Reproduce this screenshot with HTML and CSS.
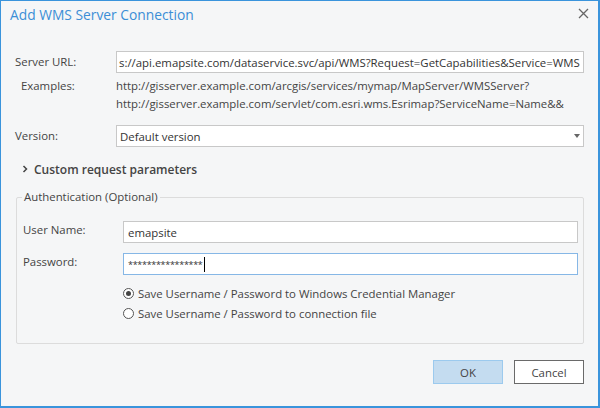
FILE: index.html
```html
<!DOCTYPE html>
<html>
<head>
<meta charset="utf-8">
<link rel="stylesheet" href="styles.css">
</head>
<body>
<div class="dialog">
  <div class="titlebar">
    <span class="title">Add WMS Server Connection</span>
    <svg class="close" width="11" height="11" viewBox="0 0 11 11"><path d="M1 1L10 10M10 1L1 10" stroke="#666" stroke-width="1.3" fill="none"/></svg>
  </div>
  <div class="form">
    <div class="row">
      <span class="label">Server URL:</span>
      <div class="field url">s://api.emapsite.com/dataservice.svc/api/WMS?Request=GetCapabilities&amp;Service=WMS</div>
    </div>
    <div class="row examples">
      <span class="label ex-label">Examples:</span>
      <div class="ex-lines">
        <div>http://gisserver.example.com/arcgis/services/mymap/MapServer/WMSServer?</div>
        <div>http://gisserver.example.com/servlet/com.esri.wms.Esrimap?ServiceName=Name&amp;&amp;</div>
      </div>
    </div>
    <div class="row version">
      <span class="label">Version:</span>
      <div class="field select"><span>Default version</span><span class="caret"></span></div>
    </div>
    <div class="expander">
      <svg width="8" height="8" viewBox="0 0 8 8"><path d="M2.5 1L5.5 4L2.5 7" stroke="#444" stroke-width="1.5" fill="none"/></svg>
      <span>Custom request parameters</span>
    </div>
    <fieldset class="group">
      <legend>Authentication (Optional)</legend>
      <div class="row inner">
        <span class="label ilabel">User Name:</span>
        <div class="field ifield">emapsite</div>
      </div>
      <div class="row inner pw">
        <span class="label ilabel">Password:</span>
        <div class="field ifield focus"><span class="stars">****************</span><span class="cursor"></span></div>
      </div>
      <div class="radios">
        <label class="radio"><span class="dot checked"></span>Save Username / Password to Windows Credential Manager</label>
        <label class="radio"><span class="dot"></span>Save Username / Password to connection file</label>
      </div>
    </fieldset>
    <div class="buttons">
      <button class="btn ok">OK</button>
      <button class="btn cancel">Cancel</button>
    </div>
  </div>
</div>
</body>
</html>
```
FILE: styles.css
```css
html, body {
  margin: 0;
  padding: 0;
  background: #f5f6f7;
}
.dialog {
  box-sizing: border-box;
  width: 600px;
  height: 408px;
  border: 1px solid #3a94dc;
  border-bottom-width: 2px;
  border-right-width: 2px;
  background: #f5f6f7;
  font-family: "Open Sans", "Noto Sans", sans-serif;
  font-size: 11.4px;
  color: #444;
}
.titlebar {
  height: 40px;
  display: flex;
  align-items: flex-start;
  justify-content: space-between;
  padding: 3px 9px 0 9px;
  box-sizing: border-box;
}
.title {
  font-size: 13.8px;
  line-height: 22px;
  color: #3b8ed6;
}
.close {
  margin-top: 4px;
}
.form {
  padding: 10px 14px 0 14px;
}
.row {
  display: flex;
  align-items: center;
}
.label {
  width: 101px;
  flex: none;
  line-height: 18px;
}
.field {
  box-sizing: border-box;
  height: 22px;
  border: 1px solid #c8c8c8;
  background: #fff;
  flex: 1;
  display: flex;
  align-items: center;
  padding: 0 4px;
  white-space: nowrap;
  overflow: hidden;
  color: #333;
}
.url {
  padding: 0 3px 0 2px;
}
.examples {
  margin-top: 4px;
  align-items: flex-start;
}
.ex-label {
  padding-left: 6px;
  width: 95px;
}
.ex-lines {
  line-height: 18px;
  color: #444;
  white-space: nowrap;
}
.version {
  margin-top: 12px;
}
.select {
  justify-content: space-between;
  padding-left: 3px;
  padding-right: 3px;
}
.caret {
  width: 0;
  height: 0;
  border-left: 3px solid transparent;
  border-right: 3px solid transparent;
  border-top: 4px solid #666;
}
.expander {
  margin-top: 12px;
  height: 20px;
  display: flex;
  align-items: center;
  gap: 5px;
  padding-left: 6px;
  font-weight: 600;
  font-size: 12px;
  color: #444;
}
.group {
  margin: 10px 0 0 1px;
  border: 1px solid #dcdcdc;
  border-radius: 2px;
  padding: 16px 5px 0 6px;
  height: 155px;
  box-sizing: border-box;
}
.group legend {
  padding: 0 2px;
  margin-left: -1px;
  line-height: 16px;
  color: #444;
}
.inner {
  align-items: flex-start;
}
.ilabel {
  width: 100px;
  line-height: 18px;
}
.pw {
  margin-top: 10px;
}
.focus {
  border-color: #86b7e6;
}
.stars {
  font-size: 9px;
  letter-spacing: -0.3px;
  color: #333;
}
.cursor {
  width: 1px;
  height: 15px;
  background: #000;
  margin-left: 1px;
}
.radios {
  margin-top: 8px;
  padding-left: 100px;
  display: flex;
  flex-direction: column;
}
.radio {
  display: flex;
  align-items: center;
  gap: 4px;
  height: 20px;
  color: #444;
}
.dot {
  box-sizing: border-box;
  width: 11px;
  height: 11px;
  border: 1px solid #555;
  border-radius: 50%;
  background: #fff;
  position: relative;
}
.dot.checked::after {
  content: "";
  position: absolute;
  left: 2px;
  top: 2px;
  width: 5px;
  height: 5px;
  border-radius: 50%;
  background: #444;
}
.buttons {
  display: flex;
  justify-content: flex-end;
  gap: 11px;
  margin-top: 16px;
}
.btn {
  box-sizing: border-box;
  width: 70px;
  height: 24px;
  font-family: inherit;
  font-size: 11.4px;
  color: #444;
  padding: 0;
}
.ok {
  background: #c4dcf0;
  border: 1px solid #9ccaee;
}
.cancel {
  background: #fff;
  border: 1px solid #6a6a6a;
}
```
